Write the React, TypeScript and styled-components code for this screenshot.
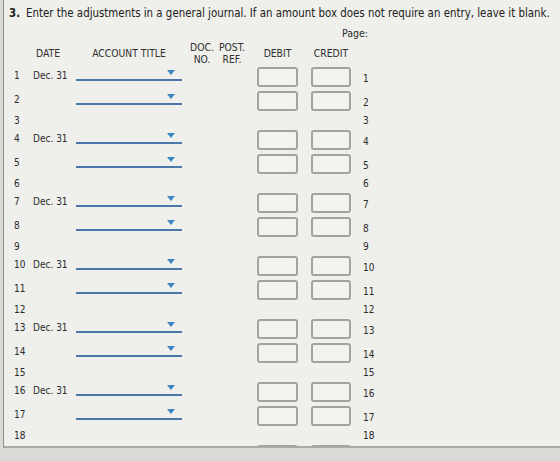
import styled, { createGlobalStyle } from "styled-components";

const GlobalStyle = createGlobalStyle`
  html, body {
    margin: 0;
    padding: 0;
    background: #d9d9d5;
  }
  body {
    font-family: "DejaVu Sans Condensed", "DejaVu Sans", Verdana, sans-serif;
    font-stretch: condensed;
    color: #2b2b2b;
  }
`;

// column template shared by the header and every journal line
const COLS = "19px 43px 112px 28px 32px 50px 53px 1fr";

const Panel = styled.div`
  margin-left: 3px;
  height: 446px;
  border-left: 1px solid #8e8e8b;
  border-bottom: 2px solid #a9a9a5;
  background: #efefeb;
  overflow: hidden;
`;

const Title = styled.div`
  padding: 6px 0 0 5px;
  font-size: 11.4px;
  line-height: 14px;
  white-space: nowrap;
  color: #222;
`;

const Step = styled.b`
  margin-right: 6px;
`;

const Journal = styled.div`
  padding-left: 10px;
`;

const PageLine = styled.div`
  width: 354px;
  margin-top: 6px;
  text-align: right;
  font-size: 10.5px;
  line-height: 14px;
`;

const Row = styled.div<{ $h: number }>`
  display: grid;
  grid-template-columns: ${COLS};
  height: ${(p) => p.$h}px;
  align-items: center;
  font-size: 10px;
`;

const HeadRow = styled(Row)`
  font-size: 10.3px;
  line-height: 12px;
  text-transform: uppercase;
  color: #2f2f2f;
`;

const HeadLabel = styled.div<{ $w?: number }>`
  justify-self: ${(p) => (p.$w ? "end" : "center")};
  width: ${(p) => (p.$w ? `${p.$w}px` : "auto")};
  text-align: center;
  white-space: nowrap;
`;

const DateHead = styled.div`
  padding-left: 3px;
`;

const AccountHead = styled.div`
  width: 106px;
  text-align: center;
  white-space: nowrap;
`;

// number and date sit a little above the middle of an entry line
const LineNo = styled.div<{ $lift?: boolean }>`
  white-space: nowrap;
  padding-bottom: ${(p) => (p.$lift ? 4 : 0)}px;
`;

const RightNo = styled.div<{ $drop?: boolean }>`
  padding-left: 12px;
  padding-top: ${(p) => (p.$drop ? 2 : 0)}px;
`;

const DateCell = styled.div`
  white-space: nowrap;
  padding-bottom: 4px;
`;

const Dropdown = styled.div`
  box-sizing: border-box;
  align-self: start;
  margin-top: 3px;
  width: 106px;
  height: 13px;
  border-bottom: 2px solid #4a78ac;
  display: flex;
  justify-content: flex-end;
  align-items: flex-start;
  padding: 2px 7px 0 0;
`;

const Caret = styled.span`
  width: 0;
  height: 0;
  border-left: 4.5px solid transparent;
  border-right: 4.5px solid transparent;
  border-top: 5px solid #3a86c4;
`;

const AmountBox = styled.div<{ $w: number }>`
  box-sizing: border-box;
  justify-self: end;
  width: ${(p) => p.$w}px;
  height: 20px;
  border: 2px solid #a2a29e;
  border-radius: 3px;
  background: #f2f2ef;
`;

type Line = { n: number; kind: "first" | "second" | "blank" };

const lines: Line[] = Array.from({ length: 18 }, (_, i) => ({
  n: i + 1,
  kind: i % 3 === 0 ? "first" : i % 3 === 1 ? "second" : "blank",
}));

function JournalLine({ line }: { line: Line }) {
  if (line.kind === "blank") {
    return (
      <Row $h={15}>
        <LineNo>{line.n}</LineNo>
        <div />
        <div />
        <div />
        <div />
        <div />
        <div />
        <RightNo>{line.n}</RightNo>
      </Row>
    );
  }
  return (
    <Row $h={24}>
      <LineNo $lift>{line.n}</LineNo>
      <DateCell>{line.kind === "first" ? "Dec. 31" : ""}</DateCell>
      <Dropdown>
        <Caret />
      </Dropdown>
      <div />
      <div />
      <AmountBox $w={41} />
      <AmountBox $w={40} />
      <RightNo $drop>{line.n}</RightNo>
    </Row>
  );
}

// the next entry line starts just above the panel's lower edge
function NextLine() {
  return (
    <Row $h={24}>
      <div />
      <div />
      <Dropdown>
        <Caret />
      </Dropdown>
      <div />
      <div />
      <AmountBox $w={41} />
      <AmountBox $w={40} />
      <div />
    </Row>
  );
}

export default function App() {
  return (
    <>
      <GlobalStyle />
      <Panel>
        <Title>
          <Step>3.</Step>Enter the adjustments in a general journal. If an
          amount box does not require an entry, leave it blank.
        </Title>
        <Journal>
          <PageLine>Page:</PageLine>
          <HeadRow $h={25}>
            <div />
            <DateHead>DATE</DateHead>
            <AccountHead>ACCOUNT TITLE</AccountHead>
            <HeadLabel>
              DOC.
              <br />
              NO.
            </HeadLabel>
            <HeadLabel>
              POST.
              <br />
              REF.
            </HeadLabel>
            <HeadLabel $w={41}>DEBIT</HeadLabel>
            <HeadLabel $w={40}>CREDIT</HeadLabel>
            <div />
          </HeadRow>
          {lines.map((line) => (
            <JournalLine key={line.n} line={line} />
          ))}
          <NextLine />
        </Journal>
      </Panel>
    </>
  );
}
